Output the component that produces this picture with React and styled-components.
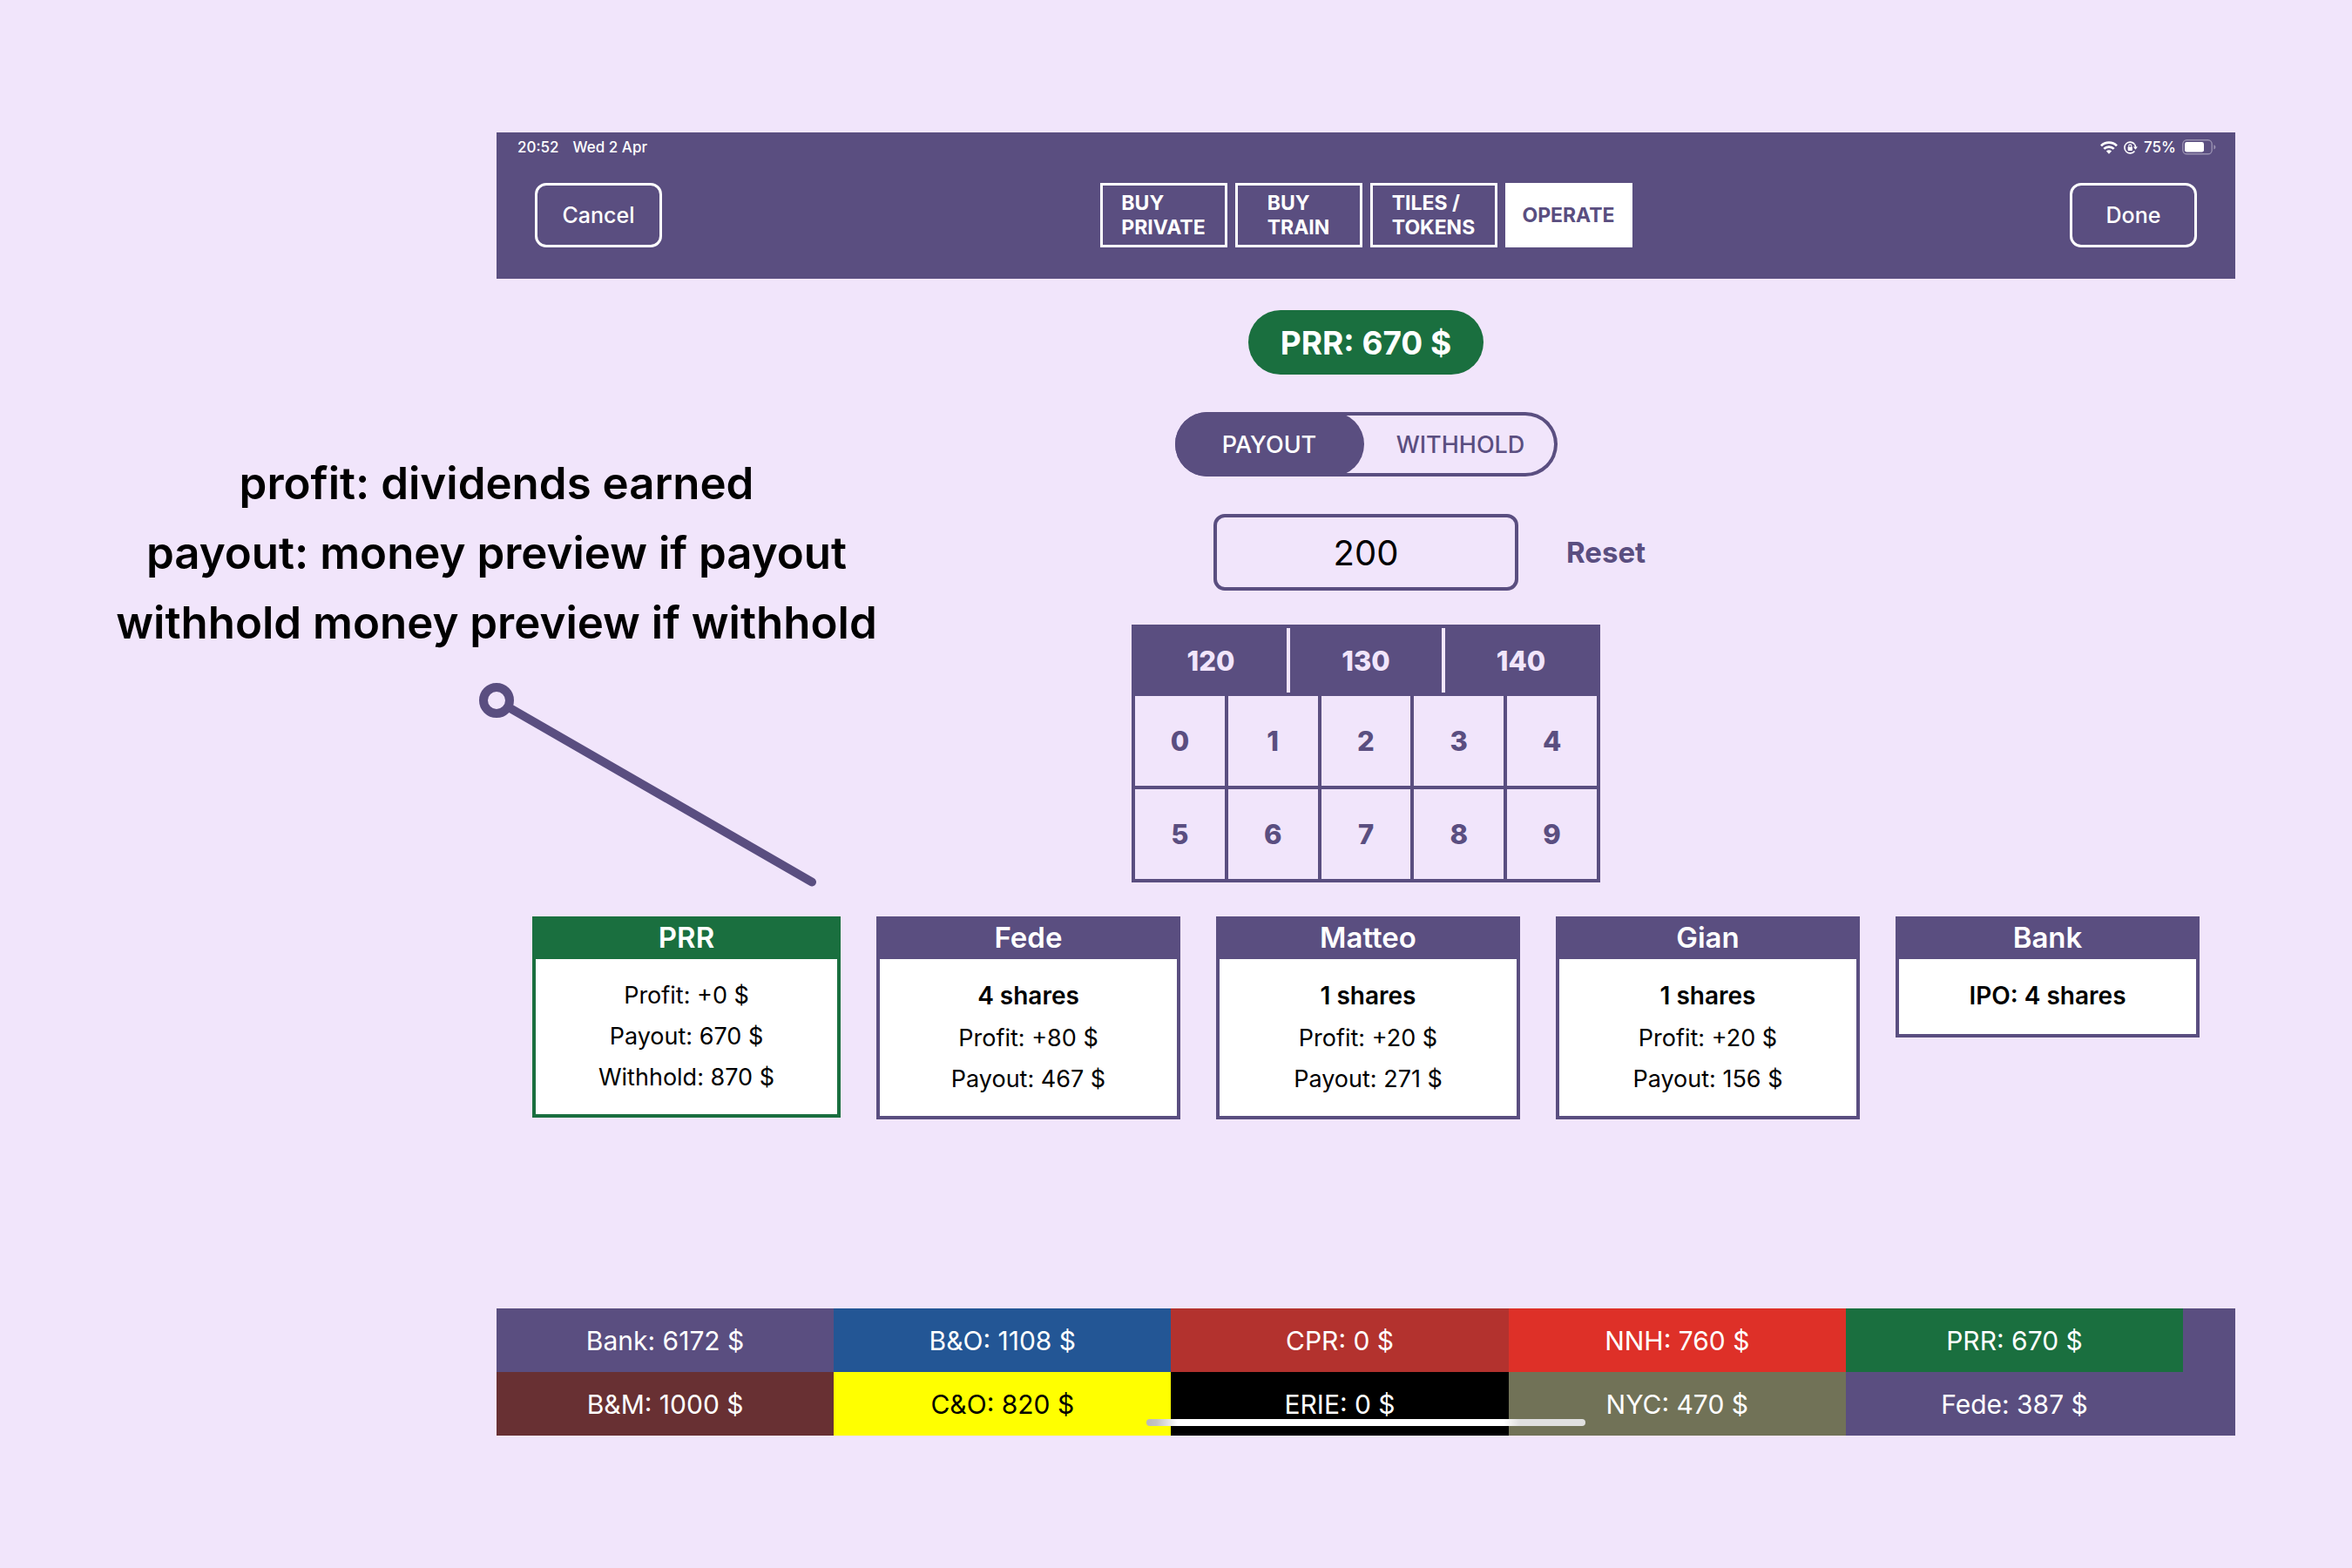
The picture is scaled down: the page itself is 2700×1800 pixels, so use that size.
import React, { useState } from "react";
import styled, { createGlobalStyle } from "styled-components";

const color = {
  purple: "#5a4e80",
  lavender: "#f1e5fb",
  green: "#1a6f3f",
  white: "#ffffff",
};

const GlobalStyle = createGlobalStyle`
  * { box-sizing: border-box; }
  body {
    margin: 0;
    background: ${color.lavender};
    color: #000;
    font-family: Inter, "Liberation Sans", sans-serif;
  }
  button, input { font: inherit; color: inherit; margin: 0; padding: 0; }
  button { cursor: pointer; }
`;

const Page = styled.div`
  position: relative;
  display: flex;
  min-height: 100vh;
  padding: 152px 134px 152px 570px;
`;

const Screen = styled.div`
  position: relative;
  display: flex;
  flex: 1;
  flex-direction: column;
  min-width: 0;
`;

const Header = styled.header`
  background: ${color.purple};
  color: ${color.white};
`;

const StatusBar = styled.div`
  display: flex;
  align-items: center;
  justify-content: space-between;
  height: 34px;
  padding: 0 22px 0 24px;
  font-size: 17px;
  font-weight: 500;
`;

const StatusGroup = styled.div`
  display: flex;
  align-items: center;
  gap: ${(p) => p.$gap}px;
`;

const Toolbar = styled.div`
  display: grid;
  grid-template-columns: 1fr auto 1fr;
  padding: 24px 44px 36px;
`;

const ActionButton = styled.button`
  justify-self: ${(p) => p.$side};
  width: 146px;
  height: 74px;
  border: 3px solid ${color.white};
  border-radius: 13px;
  background: transparent;
  font-size: 25px;
  font-weight: 500;
`;

const Tabs = styled.nav`
  display: flex;
  gap: 9px;
`;

const Tab = styled.button`
  display: flex;
  align-items: center;
  justify-content: center;
  width: 146px;
  height: 74px;
  border: 3px solid ${color.white};
  background: ${(p) => (p.$active ? color.white : "transparent")};
  color: ${(p) => (p.$active ? color.purple : color.white)};
  font-size: 23px;
  font-weight: 700;
  line-height: 28px;
  text-align: left;
  white-space: pre-line;
`;

const Main = styled.main`
  display: flex;
  flex: 1;
  flex-direction: column;
  align-items: center;
  gap: 39px;
  padding: 36px 41px;
`;

const Controls = styled.div`
  display: flex;
  flex-direction: column;
  align-items: center;
  gap: 43px;
  width: 100%;
`;

const Balance = styled.output`
  display: flex;
  align-items: center;
  height: 74px;
  padding: 0 37px;
  border-radius: 37px;
  background: ${color.green};
  color: ${color.white};
  font-size: 37px;
  font-weight: 700;
`;

const Toggle = styled.div`
  display: flex;
  border-radius: 37px;
  box-shadow: inset 0 0 0 4px ${color.purple};
`;

const Option = styled.label`
  display: flex;
  align-items: center;
  justify-content: center;
  width: ${(p) => p.$width}px;
  height: 74px;
  border-radius: 37px;
  color: ${color.purple};
  font-size: 27px;
  font-weight: 500;
  cursor: pointer;

  &:has(input:checked) {
    background: ${color.purple};
    color: ${color.white};
  }
`;

const HiddenRadio = styled.input`
  position: absolute;
  opacity: 0;
`;

const AmountRow = styled.div`
  display: grid;
  grid-template-columns: 1fr 350px 1fr;
  gap: 55px;
  align-items: center;
  width: 100%;
`;

const Amount = styled.input`
  grid-column: 2;
  width: 100%;
  height: 88px;
  border: 4px solid ${color.purple};
  border-radius: 13px;
  background: transparent;
  font-size: 40px;
  text-align: center;
`;

const Reset = styled.button`
  justify-self: start;
  border: 0;
  background: transparent;
  color: ${color.purple};
  font-size: 33px;
  font-weight: 700;
`;

const Keypad = styled.div`
  display: grid;
  gap: 4px;
  width: 538px;
  padding: 4px;
  background: ${color.purple};
`;

const KeyRow = styled.div`
  display: grid;
  grid-template-columns: repeat(${(p) => p.$columns}, 1fr);
  gap: 4px;
  background: ${(p) => (p.$quick ? color.lavender : "transparent")};
`;

const Key = styled.button`
  height: ${(p) => (p.$quick ? 74 : 103)}px;
  border: 0;
  background: ${(p) => (p.$quick ? color.purple : color.lavender)};
  color: ${(p) => (p.$quick ? color.lavender : color.purple)};
  font-size: 31px;
  font-weight: 800;
`;

const Cards = styled.section`
  display: grid;
  grid-template-columns: 354fr repeat(4, 349fr);
  gap: 41px;
  align-items: start;
  width: 100%;
`;

const Card = styled.article`
  border: 4px solid ${(p) => p.$color};
  background: ${color.white};
  text-align: center;
`;

const CardTitle = styled.h2`
  height: 45px;
  margin: 0;
  background: ${(p) => p.$color};
  color: ${color.white};
  font-size: 33px;
  font-weight: 600;
  line-height: 41px;
`;

const CardBody = styled.div`
  padding: 18px 0 19px;
`;

const Shares = styled.p`
  margin: 0;
  font-size: 28px;
  font-weight: 600;
  line-height: 49px;
`;

const Line = styled.p`
  margin: 0;
  font-size: 27px;
  line-height: 47px;
`;

const Footer = styled.footer`
  display: grid;
  grid-template-columns: repeat(5, 97fr) 15fr;
  grid-auto-rows: 73px;
  background: ${color.purple};
`;

const Account = styled.div`
  display: flex;
  grid-column: ${(p) => p.$column};
  align-items: center;
  justify-content: center;
  background: ${(p) => p.$color};
  color: ${(p) => p.$text || color.white};
  font-size: 30px;
`;

const HomeIndicator = styled.div`
  position: absolute;
  bottom: 11px;
  left: 50%;
  width: 504px;
  height: 8px;
  border-radius: 4px;
  background: linear-gradient(90deg, #b9b9b9 0, #c4c4c4 12px, #fff 36px, #fff 410px, #e0e0e0 428px, #e0e0e0 100%);
  transform: translateX(-50%);
`;

const Callout = styled.aside`
  position: absolute;
  top: 515px;
  left: 0;
  display: flex;
  flex-direction: column;
  align-items: center;
  gap: 29px;
  width: 1140px;
  pointer-events: none;
`;

const CalloutText = styled.p`
  margin: 0;
  font-size: 51px;
  font-weight: 600;
  line-height: 80px;
  text-align: center;
  white-space: pre-line;
`;

function WifiIcon() {
  return (
    <svg width="20" height="15" viewBox="0 0 20 15" fill="none" stroke="#fff" strokeWidth="2.7" aria-label="Wi-Fi">
      <path d="M1 5.4a12.8 12.8 0 0 1 18 0" />
      <path d="M4.3 8.9a8.1 8.1 0 0 1 11.4 0" />
      <path d="M10 14.8 6.9 11.6a4.4 4.4 0 0 1 6.2 0Z" fill="#fff" stroke="none" />
    </svg>
  );
}

function RotationLockIcon() {
  return (
    <svg width="16" height="15" viewBox="0 0 16 15" fill="none" stroke="#fff" strokeWidth="1.6" aria-label="Rotation lock">
      <path d="M12.4 3.6A6.4 6.4 0 1 0 12.4 11.400" />
      <path d="M12.400 3.600A6.400 6.400 0 0 1 13.600 7" />
      <path d="M10.900 6.400h5l-2.500 3.400Z" fill="#fff" stroke="none" />
      <rect x="4.700" y="6.700" width="5.200" height="4.200" rx="0.600" fill="#fff" stroke="none" />
      <path d="M5.800 7V5.400a1.500 1.500 0 0 1 3 0V7" strokeWidth="1.100" />
    </svg>
  );
}

function BatteryIcon() {
  return (
    <svg width="39" height="18" viewBox="0 0 39 18" fill="none" aria-label="Battery">
      <rect x="0.8" y="0.8" width="33.4" height="16" rx="4.6" stroke="#9a92b1" strokeWidth="1.4" />
      <rect x="3" y="3" width="22" height="11.6" rx="2.4" fill="#fff" />
      <path d="M36.4 6.2c2.6.8 2.6 4.4 0 5.2Z" fill="#9a92b1" />
    </svg>
  );
}

const tabs = ["BUY\nPRIVATE", "BUY\nTRAIN", "TILES /\nTOKENS", "OPERATE"];

const cards = [
  { name: "PRR", color: color.green, lines: ["Profit: +0 $", "Payout: 670 $", "Withhold: 870 $"] },
  { name: "Fede", shares: "4 shares", lines: ["Profit: +80 $", "Payout: 467 $"] },
  { name: "Matteo", shares: "1 shares", lines: ["Profit: +20 $", "Payout: 271 $"] },
  { name: "Gian", shares: "1 shares", lines: ["Profit: +20 $", "Payout: 156 $"] },
  { name: "Bank", shares: "IPO: 4 shares", lines: [] },
];

const accounts = [
  ["Bank: 6172 $", color.purple],
  ["B&O: 1108 $", "#235695"],
  ["CPR: 0 $", "#b3322e"],
  ["NNH: 760 $", "#de3028"],
  ["PRR: 670 $", color.green],
  ["B&M: 1000 $", "#683033"],
  ["C&O: 820 $", "#ffff00", "#000"],
  ["ERIE: 0 $", "#000"],
  ["NYC: 470 $", "#717257"],
  ["Fede: 387 $", color.purple],
];

export default function App() {
  const [tab, setTab] = useState(3);
  const [amount, setAmount] = useState("200");

  return (
    <>
      <GlobalStyle />
      <Page>
        <Screen>
          <Header>
            <StatusBar>
              <StatusGroup $gap={16}>
                <span>20:52</span>
                <span>Wed 2 Apr</span>
              </StatusGroup>
              <StatusGroup $gap={7}>
                <WifiIcon />
                <RotationLockIcon />
                <span>75%</span>
                <BatteryIcon />
              </StatusGroup>
            </StatusBar>
            <Toolbar>
              <ActionButton $side="start">Cancel</ActionButton>
              <Tabs>
                {tabs.map((label, i) => (
                  <Tab key={label} $active={i === tab} onClick={() => setTab(i)}>
                    {label}
                  </Tab>
                ))}
              </Tabs>
              <ActionButton $side="end">Done</ActionButton>
            </Toolbar>
          </Header>

          <Main>
            <Controls>
              <Balance>PRR: 670 $</Balance>
              <Toggle role="radiogroup" aria-label="Dividend">
                <Option $width={217}>
                  <HiddenRadio type="radio" name="dividend" defaultChecked />
                  PAYOUT
                </Option>
                <Option $width={222}>
                  <HiddenRadio type="radio" name="dividend" />
                  WITHHOLD
                </Option>
              </Toggle>
              <AmountRow>
                <Amount aria-label="Amount" value={amount} onChange={(e) => setAmount(e.target.value)} />
                <Reset onClick={() => setAmount("0")}>Reset</Reset>
              </AmountRow>
            </Controls>

            <Keypad>
              <KeyRow $columns={3} $quick>
                {["120", "130", "140"].map((n) => (
                  <Key key={n} $quick onClick={() => setAmount(n)}>{n}</Key>
                ))}
              </KeyRow>
              <KeyRow $columns={5}>
                {[0, 1, 2, 3, 4, 5, 6, 7, 8, 9].map((n) => (
                  <Key key={n} onClick={() => setAmount(amount + n)}>{n}</Key>
                ))}
              </KeyRow>
            </Keypad>

            <Cards>
              {cards.map((card) => (
                <Card key={card.name} $color={card.color || color.purple}>
                  <CardTitle $color={card.color || color.purple}>{card.name}</CardTitle>
                  <CardBody>
                    {card.shares && <Shares>{card.shares}</Shares>}
                    {card.lines.map((line) => (
                      <Line key={line}>{line}</Line>
                    ))}
                  </CardBody>
                </Card>
              ))}
            </Cards>
          </Main>

          <Footer>
            {accounts.map(([label, background, text], i) => (
              <Account key={label} $color={background} $text={text} $column={(i % 5) + 1}>
                {label}
              </Account>
            ))}
          </Footer>
          <HomeIndicator />
        </Screen>

        <Callout>
          <CalloutText>
            {"profit: dividends earned\npayout: money preview if payout\nwithhold money preview if withhold"}
          </CalloutText>
          <svg width="800" height="240" viewBox="0 0 800 240" fill="none" stroke={color.purple} strokeWidth="10">
            <path d="M413 27.500 762 228.500" strokeLinecap="round" />
            <circle cx="400" cy="20" r="15" fill={color.lavender} />
          </svg>
        </Callout>
      </Page>
    </>
  );
}
